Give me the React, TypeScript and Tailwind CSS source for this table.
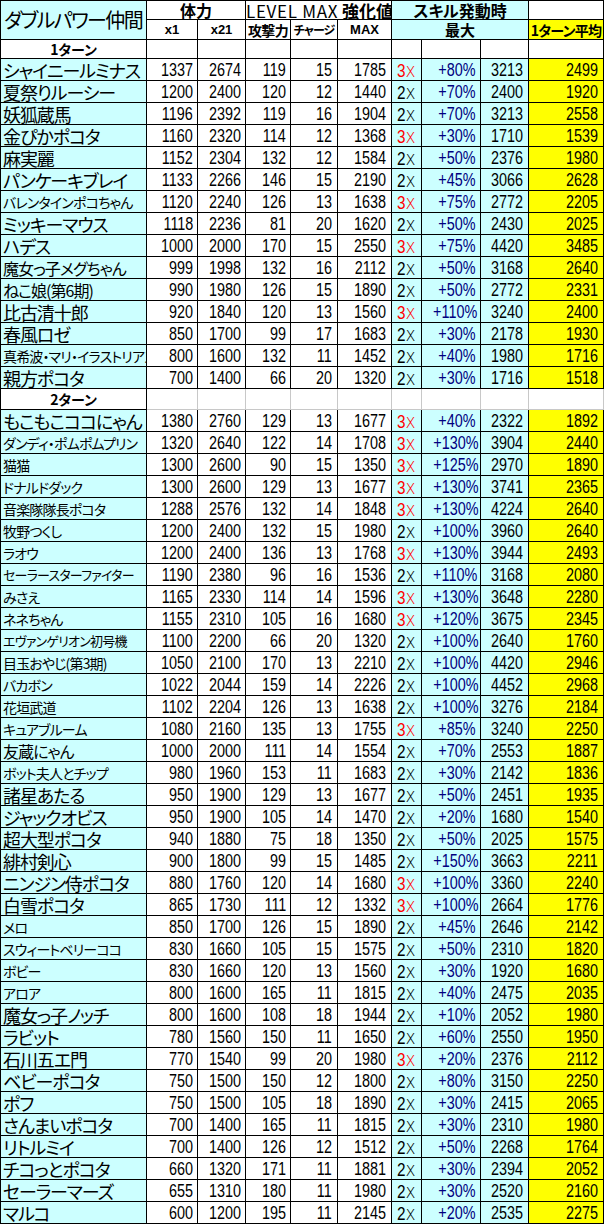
type Size = "l" | "m" | "s" | "xs";
type Row = [string, Size, number, number, number, number, number, 2 | 3, string, number, number];

const nameSize: Record<Size, string> = {
  l: "text-[18px]",
  m: "text-[16px]",
  s: "text-[14px]",
  xs: "text-[13px]",
};

const turn1: Row[] = [
  ["シャイニールミナス", "l", 1337, 2674, 119, 15, 1785, 3, "+80%", 3213, 2499],
  ["夏祭りルーシー", "l", 1200, 2400, 120, 12, 1440, 2, "+70%", 2400, 1920],
  ["妖狐蔵馬", "l", 1196, 2392, 119, 16, 1904, 2, "+70%", 3213, 2558],
  ["金ぴかポコタ", "l", 1160, 2320, 114, 12, 1368, 3, "+30%", 1710, 1539],
  ["麻実麗", "l", 1152, 2304, 132, 12, 1584, 2, "+50%", 2376, 1980],
  ["パンケーキブレイ", "l", 1133, 2266, 146, 15, 2190, 2, "+45%", 3066, 2628],
  ["バレンタインポコちゃん", "s", 1120, 2240, 126, 13, 1638, 3, "+75%", 2772, 2205],
  ["ミッキーマウス", "l", 1118, 2236, 81, 20, 1620, 2, "+50%", 2430, 2025],
  ["ハデス", "l", 1000, 2000, 170, 15, 2550, 3, "+75%", 4420, 3485],
  ["魔女っ子メグちゃん", "m", 999, 1998, 132, 16, 2112, 2, "+50%", 3168, 2640],
  ["ねこ娘(第6期)", "m", 990, 1980, 126, 15, 1890, 2, "+50%", 2772, 2331],
  ["比古清十郎", "l", 920, 1840, 120, 13, 1560, 3, "+110%", 3240, 2400],
  ["春風ロゼ", "l", 850, 1700, 99, 17, 1683, 2, "+30%", 2178, 1930],
  ["真希波・マリ・イラストリアス", "s", 800, 1600, 132, 11, 1452, 2, "+40%", 1980, 1716],
  ["親方ポコタ", "l", 700, 1400, 66, 20, 1320, 2, "+30%", 1716, 1518],
];

const turn2: Row[] = [
  ["もこもこココにゃん", "l", 1380, 2760, 129, 13, 1677, 3, "+40%", 2322, 1892],
  ["ダンディ・ポムポムプリン", "s", 1320, 2640, 122, 14, 1708, 3, "+130%", 3904, 2440],
  ["猫猫", "s", 1300, 2600, 90, 15, 1350, 3, "+125%", 2970, 1890],
  ["ドナルドダック", "s", 1300, 2600, 129, 13, 1677, 3, "+130%", 3741, 2365],
  ["音楽隊隊長ポコタ", "s", 1288, 2576, 132, 14, 1848, 3, "+130%", 4224, 2640],
  ["牧野つくし", "s", 1200, 2400, 132, 15, 1980, 2, "+100%", 3960, 2640],
  ["ラオウ", "s", 1200, 2400, 136, 13, 1768, 3, "+130%", 3944, 2493],
  ["セーラースターファイター", "xs", 1190, 2380, 96, 16, 1536, 2, "+110%", 3168, 2080],
  ["みさえ", "s", 1165, 2330, 114, 14, 1596, 3, "+130%", 3648, 2280],
  ["ネネちゃん", "s", 1155, 2310, 105, 16, 1680, 3, "+120%", 3675, 2345],
  ["エヴァンゲリオン初号機", "xs", 1100, 2200, 66, 20, 1320, 2, "+100%", 2640, 1760],
  ["目玉おやじ(第3期)", "s", 1050, 2100, 170, 13, 2210, 2, "+100%", 4420, 2946],
  ["バカボン", "s", 1022, 2044, 159, 14, 2226, 2, "+100%", 4452, 2968],
  ["花垣武道", "s", 1102, 2204, 126, 13, 1638, 2, "+100%", 3276, 2184],
  ["キュアブルーム", "s", 1080, 2160, 135, 13, 1755, 3, "+85%", 3240, 2250],
  ["友蔵にゃん", "m", 1000, 2000, 111, 14, 1554, 2, "+70%", 2553, 1887],
  ["ボット夫人とチップ", "s", 980, 1960, 153, 11, 1683, 2, "+30%", 2142, 1836],
  ["諸星あたる", "l", 950, 1900, 129, 13, 1677, 2, "+50%", 2451, 1935],
  ["ジャックオビス", "l", 950, 1900, 105, 14, 1470, 2, "+20%", 1680, 1540],
  ["超大型ポコタ", "l", 940, 1880, 75, 18, 1350, 2, "+50%", 2025, 1575],
  ["緋村剣心", "l", 900, 1800, 99, 15, 1485, 2, "+150%", 3663, 2211],
  ["ニンジン侍ポコタ", "l", 880, 1760, 120, 14, 1680, 3, "+100%", 3360, 2240],
  ["白雪ポコタ", "l", 865, 1730, 111, 12, 1332, 3, "+100%", 2664, 1776],
  ["メロ", "s", 850, 1700, 126, 15, 1890, 2, "+45%", 2646, 2142],
  ["スウィートベリーココ", "s", 830, 1660, 105, 15, 1575, 2, "+50%", 2310, 1820],
  ["ボビー", "s", 830, 1660, 120, 13, 1560, 2, "+30%", 1920, 1680],
  ["アロア", "s", 800, 1600, 165, 11, 1815, 2, "+40%", 2475, 2035],
  ["魔女っ子ノッチ", "l", 800, 1600, 108, 18, 1944, 2, "+10%", 2052, 1980],
  ["ラビット", "l", 780, 1560, 150, 11, 1650, 2, "+60%", 2550, 1950],
  ["石川五エ門", "l", 770, 1540, 99, 20, 1980, 3, "+20%", 2376, 2112],
  ["ベビーポコタ", "l", 750, 1500, 150, 12, 1800, 2, "+80%", 3150, 2250],
  ["ポフ", "l", 750, 1500, 105, 18, 1890, 2, "+30%", 2415, 2065],
  ["さんまいポコタ", "l", 700, 1400, 165, 11, 1815, 2, "+30%", 2310, 1980],
  ["リトルミイ", "l", 700, 1400, 126, 12, 1512, 2, "+50%", 2268, 1764],
  ["チコっとポコタ", "l", 660, 1320, 171, 11, 1881, 2, "+30%", 2394, 2052],
  ["セーラーマーズ", "l", 655, 1310, 180, 11, 1980, 2, "+30%", 2520, 2160],
  ["マルコ", "l", 600, 1200, 195, 11, 2145, 2, "+20%", 2535, 2275],
];

const jp = "font-['Noto_Sans_CJK_JP',sans-serif] [font-feature-settings:'palt']";
const cell = "border border-black p-0 align-middle";
const num = `${cell} text-right pr-[4px]`;

// the sheet's digits are tall and narrow, so squeeze the sans face a little
function N({ children }: { children: React.ReactNode }) {
  return <span className="inline-block origin-right scale-x-[0.8]">{children}</span>;
}

function DataRow({ row }: { row: Row }) {
  const [name, size, x1, x21, atk, chg, max, mult, pct, skillMax, avg] = row;
  return (
    <tr className="h-[22px]">
      <td
        className={`${cell} bg-[#ccffff] pl-[2px] whitespace-nowrap overflow-hidden tracking-[-0.06em] ${jp} ${nameSize[size]}`}
      >
        {name}
      </td>
      <td className={`${num} pr-[3px]`}>
        <N>{x1}</N>
      </td>
      <td className={`${num} pr-[3px]`}>
        <N>{x21}</N>
      </td>
      <td className={num}>
        <N>{atk}</N>
      </td>
      <td className={`${num} pr-[5px]`}>
        <N>{chg}</N>
      </td>
      <td className={`${num} pr-[5px]`}>
        <N>{max}</N>
      </td>
      <td className={`${cell} bg-[#ccffff] pl-[5px] ${mult === 3 ? "text-[#ff0000]" : "text-black"}`}>
        <span className="inline-block origin-left scale-x-[0.85]">
          {mult}
          <span className="font-['DejaVu_Sans',sans-serif] font-light text-[20px]">x</span>
        </span>
      </td>
      <td className={`${num} bg-[#ccffff] text-[#000080]`}>
        <N>{pct}</N>
      </td>
      <td className={`${num} bg-[#ccffff] pr-[5px]`}>
        <N>{skillMax}</N>
      </td>
      <td className={`${num} bg-[#ffff00] pr-[5px]`}>
        <N>{avg}</N>
      </td>
    </tr>
  );
}

function SectionRow({ label, grid }: { label: string; grid?: boolean }) {
  const other = grid ? "border border-[#c8c8c8] p-0" : cell;
  return (
    <tr className={grid ? "h-[21px]" : "h-[19px]"}>
      <td className={`${cell} text-center font-bold text-[14px] ${jp}`}>{label}</td>
      {Array.from({ length: 9 }).map((_, i) => (
        <td key={i} className={other} />
      ))}
    </tr>
  );
}

export default function App() {
  return (
    <div className="w-[605px] bg-white text-black">
      <table className="table-fixed border-collapse w-[603px] font-['Liberation_Sans',sans-serif] text-[18px] leading-none">
        <colgroup>
          <col className="w-[146px]" />
          <col className="w-[51px]" />
          <col className="w-[48px]" />
          <col className="w-[45px]" />
          <col className="w-[47px]" />
          <col className="w-[54px]" />
          <col className="w-[30px]" />
          <col className="w-[59px]" />
          <col className="w-[48px]" />
          <col className="w-[75px]" />
        </colgroup>
        <tbody>
          <tr className="h-[19px]">
            <td
              rowSpan={2}
              className={`${cell} bg-[#ccffff] pl-[3px] text-[20px] tracking-[-0.08em] whitespace-nowrap overflow-hidden ${jp}`}
            >
              ダブルパワー仲間
            </td>
            <td colSpan={2} className={`${cell} text-center font-bold text-[16px] ${jp}`}>
              体力
            </td>
            <td colSpan={3} className={`${cell} whitespace-nowrap overflow-hidden text-[17px] ${jp}`}>
              <span className="tracking-[0.04em]">LEVEL MAX</span> <span className="font-bold">強化値</span>
            </td>
            <td colSpan={3} className={`${cell} bg-[#ccffff] text-center font-bold text-[16px] ${jp}`}>
              スキル発動時
            </td>
            <td className={cell} />
          </tr>
          <tr className="h-[20px]">
            <td className={`${cell} text-center font-bold text-[13px]`}>x1</td>
            <td className={`${cell} text-center font-bold text-[13px]`}>x21</td>
            <td className={`${cell} text-center font-bold text-[14px] whitespace-nowrap tracking-[-0.05em] ${jp}`}>
              攻撃力
            </td>
            <td className={`${cell} text-center font-bold text-[12px] whitespace-nowrap tracking-[-0.08em] ${jp}`}>
              チャージ
            </td>
            <td className={`${cell} text-center font-bold text-[13px]`}>MAX</td>
            <td colSpan={3} className={`${cell} bg-[#ccffff] text-center font-bold text-[15px] ${jp}`}>
              最大
            </td>
            <td
              className={`${cell} bg-[#ffff00] text-center font-bold text-[14px] whitespace-nowrap tracking-[-0.05em] ${jp}`}
            >
              1ターン平均
            </td>
          </tr>
          <SectionRow label="1ターン" />
          {turn1.map((row) => (
            <DataRow key={row[0]} row={row} />
          ))}
          <SectionRow label="2ターン" grid />
          {turn2.map((row) => (
            <DataRow key={row[0]} row={row} />
          ))}
        </tbody>
      </table>
    </div>
  );
}
